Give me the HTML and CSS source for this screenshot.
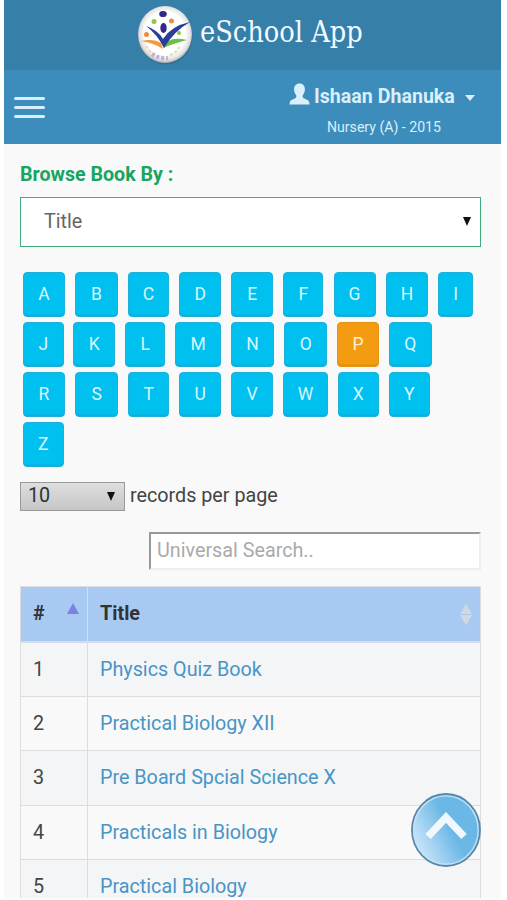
FILE: index.html
```html
<!DOCTYPE html>
<html lang="en">
<head>
<meta charset="utf-8">
<title>eSchool App</title>
<link rel="stylesheet" href="styles.css">
</head>
<body>
<div class="app">
  <header class="brand">
    <svg class="logo" width="56" height="60" viewBox="0 0 56 60">
      <defs>
        <radialGradient id="ball" cx=".5" cy=".48" r=".52"><stop offset=".72" stop-color="#fff"/><stop offset=".9" stop-color="#e3e3e3"/><stop offset="1" stop-color="#aaa"/></radialGradient>
      </defs>
      <ellipse cx="28.500" cy="31" rx="27" ry="28.500" fill="#27607f" opacity=".5"/>
      <ellipse cx="28" cy="29.500" rx="27" ry="28.500" fill="url(#ball)"/>
      <ellipse cx="26" cy="9" rx="3.800" ry="3.100" fill="#35278b"/>
      <circle cx="17" cy="16.500" r="2.500" fill="#8dc63f"/>
      <circle cx="34.500" cy="16" r="2.500" fill="#f08b3c"/>
      <circle cx="9.500" cy="29.500" r="2.500" fill="#f08b3c"/>
      <circle cx="42" cy="28" r="2" fill="#8dc63f"/>
      <path d="M4 36q12-3 20 2l2 6q-9-6-22-8z" fill="#f39a3d"/>
      <path d="M50 35q-12-3-19 1l-5 7q9-4 24-8z" fill="#6bbf45"/>
      <path d="M9 21q12 4 17 13 8-13 27-17-16 9-26 26Q20 29 9 21z" fill="#2b3d9b"/>
      <ellipse cx="26.500" cy="23" rx="3.200" ry="5" fill="#35278b"/>
      <g fill="none" stroke-width="2" stroke-dasharray="3 2"><path d="M9 41l6 8" stroke="#f5d3b5"/><path d="M15 49q7 5 16 4" stroke="#b9b0dc" stroke-width="4"/><path d="M33 50q7-2 10-10" stroke="#cfe6ad"/></g>
    </svg>
    <h1 class="brand-name">eSchool App</h1>
  </header>
  <nav class="bar">
    <div class="burger"><i></i><i></i><i></i></div>
    <div class="user">
      <div class="user-line">
        <svg class="person" width="21" height="22" viewBox="0 0 21 22"><path d="M10.500 0.500c3.600 0 5.600 2.500 5.400 6.300-.1 2.700-1.200 4.300-2.200 5.700-.3 1.500.2 2.400 1.500 3l3.800 1.700q1.500.8 1.500 4.300H.5q0-3.500 1.500-4.300l3.800-1.700c1.300-.6 1.800-1.500 1.500-3-1-1.400-2.100-3-2.200-5.700C4.900 3 6.900.5 10.500.5z" fill="#d9effb"/></svg>
        <b class="t user-name">Ishaan Dhanuka</b>
        <i class="caret"></i>
      </div>
      <div class="t user-class">Nursery (A) - 2015</div>
    </div>
  </nav>
  <main class="content">
    <div class="label"><span class="t">Browse Book By :</span></div>
    <div class="pick"><span class="t">Title</span><i class="down"></i></div>
    <div class="letters">
      <div class="row row-1"><a>A</a><a>B</a><a>C</a><a>D</a><a>E</a><a>F</a><a>G</a><a>H</a><a>I</a></div>
      <div class="row row-2"><a>J</a><a>K</a><a>L</a><a>M</a><a>N</a><a>O</a><a class="on">P</a><a>Q</a></div>
      <div class="row row-3"><a>R</a><a>S</a><a>T</a><a>U</a><a>V</a><a>W</a><a>X</a><a>Y</a></div>
      <div class="row row-4"><a>Z</a></div>
    </div>
    <div class="records">
      <div class="count"><span class="t">10</span><i class="down big"></i></div>
      <span class="t">records per page</span>
    </div>
    <div class="search"><span class="t">Universal Search..</span></div>
    <div class="table">
      <div class="tr head"><div><span class="t">#</span><i class="up"></i></div><div><span class="t">Title</span><span class="both"><i></i><i></i></span></div></div>
      <div class="tr odd"><div><span class="t">1</span></div><div><a class="t">Physics Quiz Book</a></div></div>
      <div class="tr"><div><span class="t">2</span></div><div><a class="t">Practical Biology XII</a></div></div>
      <div class="tr odd"><div><span class="t">3</span></div><div><a class="t">Pre Board Spcial Science X</a></div></div>
      <div class="tr"><div><span class="t">4</span></div><div><a class="t">Practicals in Biology</a></div></div>
      <div class="tr odd"><div><span class="t">5</span></div><div><a class="t">Practical Biology</a></div></div>
    </div>
  </main>
  <svg class="to-top" width="70" height="74" viewBox="0 0 70 74">
    <defs><linearGradient id="g" x1="0" y1=".75" x2=".55" y2=".45"><stop offset="0" stop-color="#d3eafa"/><stop offset=".45" stop-color="#a6d4f2"/><stop offset="1" stop-color="#6bb8e6"/></linearGradient></defs>
    <ellipse cx="35" cy="37" rx="34" ry="36" fill="url(#g)" stroke="#5a89a8" stroke-width="1.800"/>
    <ellipse cx="35" cy="37" rx="32.200" ry="34.200" fill="none" stroke="#c5e3f5" stroke-width="1.300"/>
    <path d="M17 43.500L35 24.500 53 43.500" fill="none" stroke="#f1f8fd" stroke-width="7.500"/>
  </svg>
</div>
</body>
</html>
```
FILE: styles.css
```css
* { box-sizing: border-box; }
body { margin: 0; background: #fff; font-family: Roboto, "Liberation Sans", sans-serif; font-size: 21px; color: #444; }
.app { position: relative; width: 497px; height: 898px; margin-left: 4px; overflow: hidden; background: #f9f9f9; }
.t { display: inline-block; white-space: nowrap; transform: scaleX(.94); transform-origin: left center; }

.brand { display: flex; height: 70px; background: #367fa9; }
.logo { flex: none; margin: 5px 0 0 133px; }
.brand-name { margin: 0 0 0 7px; font: 400 29.5px/64px "DejaVu Serif Condensed", "DejaVu Serif", serif; color: #f2faff; white-space: nowrap; transform: scaleX(.97); transform-origin: left center; }

.bar { display: flex; justify-content: space-between; height: 74px; background: #3c8dbc; color: #d9effb; }
.burger { display: flex; flex-direction: column; gap: 6px; margin: 27px 0 0 10px; }
.burger i { width: 31px; height: 3px; border-radius: 1.500px; background: #d9effb; }
.user { width: 212px; }
.user-line { display: flex; height: 30px; margin-top: 12px; }
.person { flex: none; margin-top: 1px; }
.user-name { width: 151px; margin-left: 4px; line-height: 28px; transform: scaleX(.934); }
.caret { width: 0; height: 0; margin-top: 13px; border: 5.500px solid transparent; border-top: 6px solid #d9effb; border-bottom: 0; }
.user-class { margin-left: 38px; font-size: 15px; line-height: 30px; }

.content { padding: 0 20px 0 16px; }
.label { height: 53px; padding-top: 15px; font-weight: 700; line-height: 30px; color: #17a55f; }
.label .t { transform: scaleX(.935); }
.pick { display: flex; justify-content: space-between; height: 50px; padding: 0 9px 0 23px; border: 1.500px solid #3fae7c; background: #fff; line-height: 46px; color: #666; }
.down { width: 0; height: 0; margin-top: 19px; border: 4.500px solid transparent; border-top: 9px solid #111; border-bottom: 0; }

.letters { display: grid; gap: 6px; margin: 24.5px 0 0 3px; }
.row { display: grid; height: 44px; }
.row-1 { grid-template-columns: 42px 42.5px 41.5px 42px 41.5px 40.5px 42px 42.5px 35px; column-gap: 10.1px; }
.row-2 { grid-template-columns: 40.5px 42px 40.5px 46px 43.5px 43.5px 42px 43px; column-gap: 9.7px; }
.row-3 { grid-template-columns: 42px 43px 41px 42px 41.5px 45px 40.5px 41px; column-gap: 10.1px; }
.row-4 { grid-template-columns: 40.5px; }
.row a { border: 1px solid #1fb0da; border-radius: 4px; background: #00c0ef; box-shadow: inset 0 -1.5px 0 #08b2de; font-size: 17.5px; line-height: 43px; text-align: center; color: #d8f6ff; }
.row a.on { border-color: #e29412; background: #f39c12; box-shadow: inset 0 -1.5px 0 #e18f0e; color: #fff0d0; }

.records { display: flex; height: 30px; margin-top: 16.5px; line-height: 27px; }
.count { display: flex; justify-content: space-between; width: 105px; height: 29px; margin-right: 5px; padding: 0 9px 0 7px; border: 1.500px solid #999; background: linear-gradient(#dedede, #c6c6c6); line-height: 25px; color: #333; }
.down.big { margin-top: 9px; border-width: 9px 4.500px 0; }

.search { width: 332px; height: 38px; margin: 20px 0 0 129px; padding-left: 6px; border: 2px solid #eee; border-top-color: #999; border-left-color: #999; background: #fff; line-height: 33px; color: #aaa; }

.table { margin-top: 16px; border: 1px solid #ddd; border-bottom: 0; }
.tr { display: grid; grid-template-columns: 67px 1fr; height: 54.3px; border-bottom: 1px solid #ddd; line-height: 53px; }
.tr > div { display: flex; justify-content: space-between; padding-left: 12px; }
.tr > div:first-child { border-right: 1px solid #ddd; }
.odd { background: #f3f5f7; }
.head { height: 55.7px; border-bottom: 2px solid #d5dbe8; background: #a8caf2; font-weight: 700; line-height: 52px; color: #333; }
.tr a { color: #4895c6; }
.up { width: 0; height: 0; margin: 16px 8px 0 0; border: 6px solid transparent; border-top: 0; border-bottom: 11px solid #7b82df; }
.both { display: flex; flex-direction: column; gap: 1px; margin: 17px 8px 0 0; }
.both i { width: 0; height: 0; border: 6px solid transparent; border-top: 0; border-bottom: 10px solid #d2d8df; }
.both i + i { border-top: 10px solid #d2d8df; border-bottom: 0; }

.to-top { position: absolute; left: 407px; top: 793px; }
```
